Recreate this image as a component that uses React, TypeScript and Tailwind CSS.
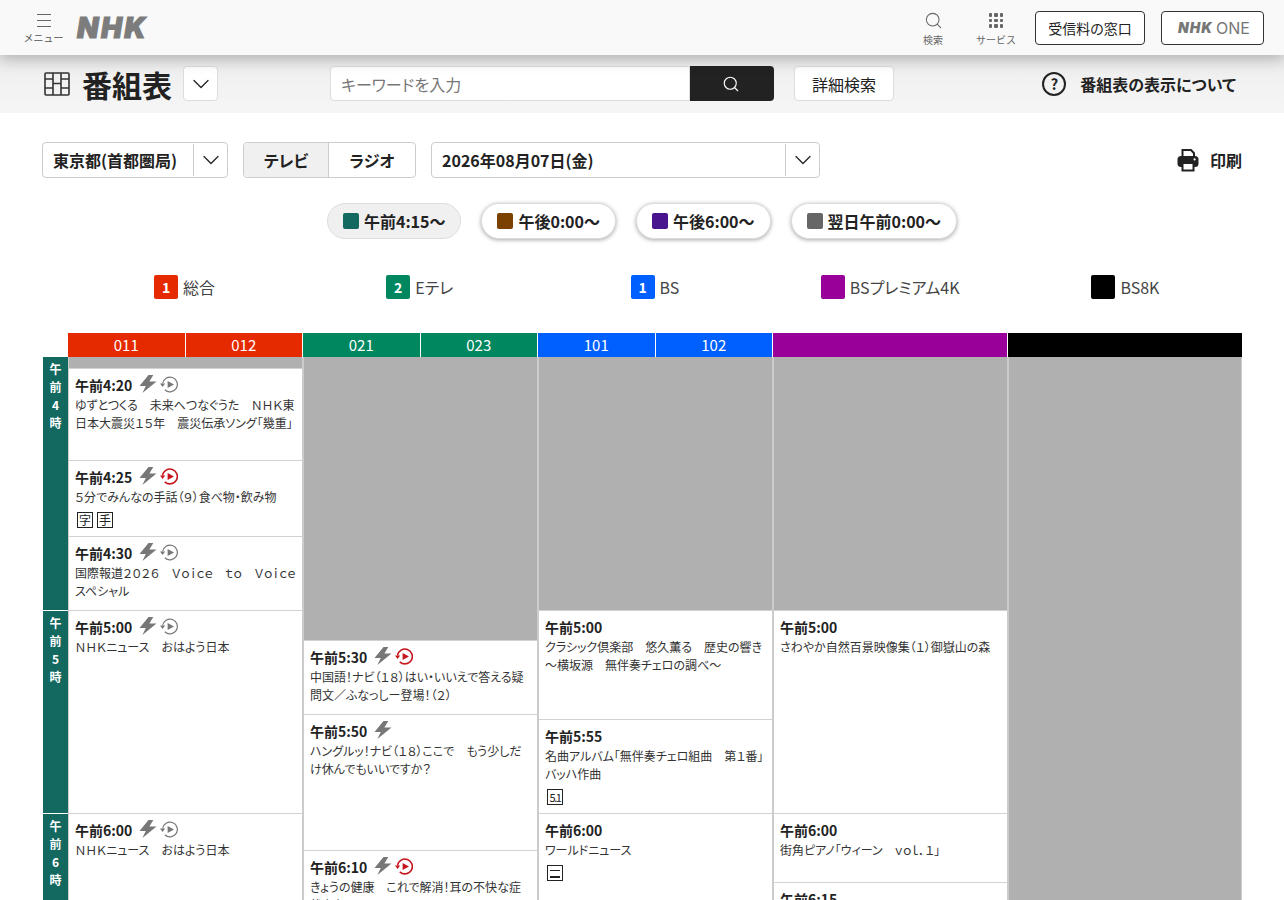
import { ChevronDown, Search } from "lucide-react";

type Program = {
  h: number;
  time?: string;
  bolt?: boolean;
  replay?: "gray" | "red";
  title?: string[];
  marks?: string[];
};

const columns: { head: string[]; color: string; programs: Program[] }[] = [
  {
    head: ["011", "012"],
    color: "bg-[#e62a00]",
    programs: [
      { h: 11 },
      { h: 92, time: "午前4:20", bolt: true, replay: "gray", title: ["ゆずとつくる　未来へつなぐうた　ＮＨＫ東", "日本大震災１５年　震災伝承ソング「幾重」"] },
      { h: 76, time: "午前4:25", bolt: true, replay: "red", title: ["５分でみんなの手話（９）食べ物・飲み物"], marks: ["字", "手"] },
      { h: 74, time: "午前4:30", bolt: true, replay: "gray", title: ["国際報道２０２６　Ｖｏｉｃｅ　ｔｏ　Ｖｏｉｃｅ", "スペシャル"] },
      { h: 203, time: "午前5:00", bolt: true, replay: "gray", title: ["ＮＨＫニュース　おはよう日本"] },
      { h: 100, time: "午前6:00", bolt: true, replay: "gray", title: ["ＮＨＫニュース　おはよう日本"] },
    ],
  },
  {
    head: ["021", "023"],
    color: "bg-[#00875f]",
    programs: [
      { h: 283 },
      { h: 74, time: "午前5:30", bolt: true, replay: "red", title: ["中国語！ナビ（１８）はい・いいえで答える疑", "問文／ふなっしー登場！（２）"] },
      { h: 136, time: "午前5:50", bolt: true, title: ["ハングルッ！ナビ（１８）ここで　もう少しだ", "け休んでもいいですか？"] },
      { h: 60, time: "午前6:10", bolt: true, replay: "red", title: ["きょうの健康　これで解消！耳の不快な症", "状（１）"] },
    ],
  },
  {
    head: ["101", "102"],
    color: "bg-[#0060ff]",
    programs: [
      { h: 253 },
      { h: 109, time: "午前5:00", title: ["クラシック倶楽部　悠久薫る　歴史の響き", "～横坂源　無伴奏チェロの調べ～"] },
      { h: 94, time: "午前5:55", title: ["名曲アルバム「無伴奏チェロ組曲　第１番」", "バッハ作曲"], marks: ["5.1"] },
      { h: 100, time: "午前6:00", title: ["ワールドニュース"], marks: ["≡"] },
    ],
  },
  {
    head: [""],
    color: "bg-[#990099]",
    programs: [
      { h: 253 },
      { h: 203, time: "午前5:00", title: ["さわやか自然百景映像集（１）御嶽山の森"] },
      { h: 69, time: "午前6:00", title: ["街角ピアノ「ウィーン　ｖｏｌ．１」"] },
      { h: 40, time: "午前6:15" },
    ],
  },
  { head: [""], color: "bg-black", programs: [{ h: 560 }] },
];

const pills = [
  { label: "午前4:15～", color: "bg-[#136860]", active: true },
  { label: "午後0:00～", color: "bg-[#7a4100]" },
  { label: "午後6:00～", color: "bg-[#4b148f]" },
  { label: "翌日午前0:00～", color: "bg-[#666666]" },
];

const legend = [
  { num: "1", name: "総合", color: "bg-[#e62a00]" },
  { num: "2", name: "Eテレ", color: "bg-[#00875f]" },
  { num: "1", name: "BS", color: "bg-[#0060ff]" },
  { num: "", name: "BSプレミアム4K", color: "bg-[#990099]" },
  { num: "", name: "BS8K", color: "bg-black" },
];

const hours = [
  { h: 253, n: "4" },
  { h: 203, n: "5" },
  { h: 104, n: "6" },
];

function Bolt() {
  return (
    <svg width="18" height="18" viewBox="0 0 18 18" className="shrink-0">
      <path d="M14.3 0 H9.5 L0.5 11 H6.8 L3.4 18 L17.5 6.5 H10.4 Z" fill="#777777" />
    </svg>
  );
}

function Replay({ tone }: { tone: "gray" | "red" }) {
  const c = tone === "red" ? "#c4161c" : "#777777";
  return (
    <svg width="18" height="18" viewBox="0 0 18 18" fill="none" className="shrink-0">
      <path d="M2.6 8.5 A7.4 7.4 0 1 1 4.8 14.8" stroke={c} strokeWidth={tone === "red" ? 1.6 : 1.2} />
      <path d="M0 8.6 L5.2 8.6 L2.6 12 Z" fill={c} />
      <path d="M7.6 6 L14 9.5 L7.6 13 Z" fill={c} />
    </svg>
  );
}

function Mark({ text }: { text: string }) {
  return (
    <span className="flex h-[16px] w-[16px] items-center justify-center border border-[#222] text-[12px] leading-none text-[#222]">
      {text === "≡" && <span className="mt-[2px] block h-[8px] w-[10px] border-y border-b-2 border-[#222]" />}
      {text === "5.1" && <span className="text-[11px] tracking-[-1.5px]">5.1</span>}
      {text !== "≡" && text !== "5.1" && text}
    </span>
  );
}

function Cell({ p }: { p: Program }) {
  if (!p.time) {
    return <div className="shrink-0 bg-[#b0b0b0]" style={{ height: p.h }} />;
  }
  return (
    <div className="shrink-0 overflow-hidden border-t border-[#d2d2d2] bg-white px-[6px] pt-[5px]" style={{ height: p.h }}>
      <div className="flex h-[22px] items-center">
        <span className="text-[14px] font-bold leading-[22px] text-[#222]">{p.time}</span>
        <div className="mb-[2px] flex items-center">
          {p.bolt && <span className="ml-[7px]"><Bolt /></span>}
          {p.replay && <span className="ml-[3px]"><Replay tone={p.replay} /></span>}
        </div>
      </div>
      {p.title?.map((t) => (
        <p key={t} className="whitespace-nowrap text-[12px] leading-[18px] text-[#333] [font-feature-settings:'palt']">
          {t}
        </p>
      ))}
      {p.marks && (
        <div className="ml-[2px] mt-[6px] flex gap-[4px]">
          {p.marks.map((m) => (
            <Mark key={m} text={m} />
          ))}
        </div>
      )}
    </div>
  );
}

export default function App() {
  return (
    <div className="h-[900px] overflow-hidden bg-white font-['Noto_Sans_CJK_JP','Noto_Sans',sans-serif] text-[#222] [font-feature-settings:'palt']">
      {/* Global header */}
      <header className="relative z-10 flex h-[55px] items-center justify-between bg-[#f9f9f9] pl-[24px] pr-[20px] shadow-[0_4px_14px_rgba(0,0,0,0.25)]">
        <div className="flex items-center">
          <div className="flex w-[39px] flex-col items-center pt-[3px]">
            <div className="flex h-[15px] w-[14px] flex-col justify-between py-[1px]">
              <span className="h-px bg-[#666]" />
              <span className="h-px bg-[#666]" />
              <span className="h-px bg-[#666]" />
            </div>
            <span className="mt-[3px] whitespace-nowrap text-[10px] leading-[14px] text-[#555] [font-feature-settings:normal]">メニュー</span>
          </div>
          <span className="ml-[14px] font-['Inter',sans-serif] text-[28px] font-black italic leading-none tracking-[2.4px] text-[#7c7c7c] [-webkit-text-stroke:1px_#7c7c7c]">NHK</span>
        </div>
        <div className="flex items-center">
          <div className="flex w-[40px] flex-col items-center pt-[3px]">
            <Search size={19} strokeWidth={1.3} className="text-[#666]" />
            <span className="mt-[3px] text-[10px] leading-[14px] text-[#666]">検索</span>
          </div>
          <div className="ml-[22px] flex w-[42px] flex-col items-center pt-[3px]">
            <div className="grid h-[19px] w-[15px] grid-cols-3 content-center gap-[2px]">
              {Array.from({ length: 9 }).map((_, i) => (
                <span key={i} className="h-[3.6px] w-[3.6px] rounded-[1px] bg-[#666]" />
              ))}
            </div>
            <span className="mt-[3px] whitespace-nowrap text-[10px] leading-[14px] text-[#666] [font-feature-settings:normal]">サービス</span>
          </div>
          <button className="ml-[18px] h-[34px] w-[110px] rounded-[4px] border border-[#333] bg-white pt-px text-[14px] text-[#222]">受信料の窓口</button>
          <button className="ml-[16px] flex h-[34px] w-[103px] items-center justify-center rounded-[4px] border border-[#333] bg-white pl-[3px]">
            <span className="font-['Inter',sans-serif] text-[14px] font-black italic tracking-[1px] text-[#777]">NHK</span>
            <span className="ml-[3px] font-['Inter',sans-serif] text-[16px] text-[#777]">ONE</span>
          </button>
        </div>
      </header>

      {/* Title bar */}
      <div className="flex h-[58px] items-center bg-gradient-to-b from-[#ebebeb] via-[#f2f2f2] to-[#f6f6f6] pb-[1px] pl-[44px] pr-[48px]">
        <svg width="26" height="24" viewBox="0 0 26 24" fill="none" stroke="#333" strokeWidth="1.6" className="shrink-0">
          <rect x="1" y="1" width="24" height="22" rx="1" />
          <path d="M9 1 V23 M17 1 V23 M1 7 H9 M1 16 H9 M17 7 H25 M17 16 H25 M9 11.5 H17" />
        </svg>
        <h1 className="ml-[12px] text-[30px] font-bold leading-none text-[#222]">番組表</h1>
        <div className="ml-[11px] flex h-[35px] w-[35px] items-center justify-center rounded-[4px] border border-[#ddd] bg-white">
          <ChevronDown size={28} strokeWidth={1.1} />
        </div>
        <div className="ml-[112px] flex h-[35px] w-[360px] items-center rounded-l-[4px] border border-[#ddd] bg-white pl-[10px] text-[16px] text-[#777]">キーワードを入力</div>
        <div className="flex h-[35px] w-[84px] items-center justify-center rounded-r-[4px] bg-[#222] pr-[2px]">
          <Search size={18} strokeWidth={1.5} className="text-white" />
        </div>
        <button className="ml-[20px] h-[35px] w-[100px] rounded-[4px] border border-[#ddd] bg-white text-[16px] text-[#222]">詳細検索</button>
        <div className="ml-auto flex items-center">
          <span className="flex h-[24px] w-[24px] items-center justify-center rounded-full border-2 border-[#222] text-[15px] font-bold leading-none">?</span>
          <span className="ml-[14px] text-[16px] font-bold">番組表の表示について</span>
        </div>
      </div>

      {/* Selectors */}
      <div className="mt-[29px] flex h-[36px] items-stretch pl-[42px] pr-[42px]">
        <div className="flex w-[186px] rounded-[4px] border border-[#ccc] bg-white">
          <span className="flex flex-1 items-center pl-[10px] text-[16px] font-bold">東京都(首都圏局)</span>
          <span className="my-px flex w-[34px] items-center justify-center border-l border-[#ccc]">
            <ChevronDown size={28} strokeWidth={1.1} />
          </span>
        </div>
        <div className="ml-[15px] flex w-[173px] rounded-[4px] border border-[#ccc]">
          <span className="flex w-[85px] items-center justify-center rounded-l-[4px] border-r border-[#ccc] bg-[#f0f0f0] text-[16px] font-bold">テレビ</span>
          <span className="flex flex-1 items-center justify-center text-[16px] font-bold">ラジオ</span>
        </div>
        <div className="ml-[15px] flex w-[389px] rounded-[4px] border border-[#ccc] bg-white">
          <span className="flex flex-1 items-center pl-[10px] text-[16px] font-bold">2026年08月07日(金)</span>
          <span className="my-px flex w-[34px] items-center justify-center border-l border-[#ccc]">
            <ChevronDown size={28} strokeWidth={1.1} />
          </span>
        </div>
        <div className="ml-auto flex items-center">
          <svg width="22" height="24" viewBox="0 0 22 24" className="shrink-0">
            <path d="M5.5 2 H14 L17 5.2 V10 H5.5 Z" fill="#fff" stroke="#222" strokeWidth="2" />
            <rect x="0.5" y="8" width="21" height="11" rx="3.5" fill="#222" />
            <rect x="5.5" y="15" width="11" height="7.5" fill="#fff" stroke="#222" strokeWidth="2" />
            <circle cx="17.6" cy="11.4" r="1.1" fill="#fff" />
          </svg>
          <span className="ml-[11px] text-[16px] font-bold">印刷</span>
        </div>
      </div>

      {/* Time pills */}
      <div className="mt-[25px] flex justify-center gap-[20px]">
        {pills.map((p) => (
          <div
            key={p.label}
            className={`flex h-[36px] items-center rounded-full border border-[#ddd] px-[15px] ${p.active ? "bg-[#f0f0f0]" : "bg-white shadow-[0_1px_4px_rgba(0,0,0,0.35)]"}`}
          >
            <span className={`h-[16px] w-[16px] rounded-[2px] ${p.color}`} />
            <span className="ml-[5px] text-[16px] font-bold leading-none">{p.label}</span>
          </div>
        ))}
      </div>

      {/* Channel legend */}
      <div className="ml-[67px] mr-[41px] mt-[36px] grid h-[24px] grid-cols-5">
        {legend.map((l) => (
          <div key={l.name} className="flex items-center justify-center">
            <span className={`flex h-[24px] w-[24px] items-center justify-center rounded-[2px] text-[14px] font-bold text-white ${l.color}`}>{l.num}</span>
            <span className="ml-[5px] text-[16px] text-[#444]">{l.name}</span>
          </div>
        ))}
      </div>

      {/* Schedule grid */}
      <div className="ml-[43px] mt-[34px] grid w-[1199px] grid-cols-[25px_235px_235px_235px_235px_234px]">
        <div className="pt-[24px]">
          {hours.map((t, i) => (
            <div
              key={t.n}
              className={`flex flex-col items-center bg-[#136860] text-[12px] font-bold leading-[18px] text-white ${i === 0 ? "pt-[3px]" : "border-t border-white pt-[3px]"}`}
              style={{ height: t.h }}
            >
              <span>午</span>
              <span>前</span>
              <span>{t.n}</span>
              <span>時</span>
            </div>
          ))}
        </div>
        {columns.map((c, i) => (
          <div key={i} className="min-w-0">
            <div className={`flex h-[24px] ${c.color} ${i < 4 ? "border-r border-white" : ""}`}>
              {c.head.map((h, j) => (
                <span key={j} className={`flex flex-1 items-center justify-center text-[15px] text-white ${j > 0 ? "border-l border-white" : ""}`}>
                  {h}
                </span>
              ))}
            </div>
            <div className="flex flex-col border-x border-[#cccccc]">
              {c.programs.map((p, j) => (
                <Cell key={j} p={p} />
              ))}
            </div>
          </div>
        ))}
      </div>
    </div>
  );
}
